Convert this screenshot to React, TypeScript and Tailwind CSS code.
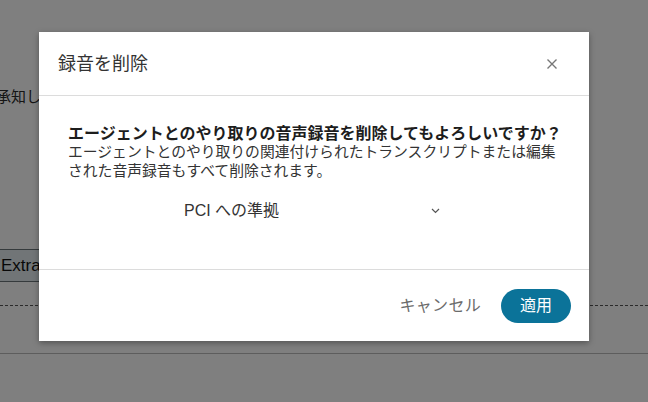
import React from "react";

export default function App() {
  const jp = { fontFamily: '"Liberation Sans", "Noto Sans CJK JP", sans-serif' };
  return (
    <div className="relative w-[648px] h-[402px] overflow-hidden bg-white" style={jp}>
      {/* background page */}
      <div className="absolute left-[-4px] top-[87px] text-[15px] leading-[20px] text-[#2a2a2a] whitespace-nowrap">
        承知し...
      </div>
      <div className="absolute left-[-4px] top-[249px] w-[120px] h-[33px] border border-[#6b7478] bg-[#e2eaee] text-[17px] leading-[31px] pl-[4px] text-[#111]">
        Extra
      </div>
      <div className="absolute left-0 right-0 top-[305px] border-t border-dashed border-[#555]" />
      <div className="absolute left-0 right-0 top-[353px] border-t border-[#bbb]" />
      <div className="absolute inset-0 bg-black/50" />

      {/* modal */}
      <div className="absolute left-[39px] top-[32px] w-[550px] h-[309px] bg-white shadow-[0_2px_6px_rgba(0,0,0,0.35)] flex flex-col">
        <div className="h-[64px] flex items-center justify-between border-b border-[#dcdcdc] pl-[19px] pr-[31px]">
          <div className="text-[18px] text-[#333] mt-[1px]">録音を削除</div>
          <svg width="12" height="12" viewBox="0 0 12 12" className="text-[#777]">
            <path d="M1.5 1.5 L10.5 10.5 M10.5 1.5 L1.5 10.5" stroke="currentColor" strokeWidth="1.4" />
          </svg>
        </div>
        <div className="h-[174px] border-b border-[#dcdcdc] pl-[29px] pr-[20px] pt-[28px]">
          <div className="text-[16px] leading-[20px] font-bold text-[#1d1d1d] whitespace-nowrap">
            エージェントとのやり取りの音声録音を削除してもよろしいですか？
          </div>
          <div className="text-[14.8px] leading-[19px] text-[#333] mt-[-1px]">
            エージェントとのやり取りの関連付けられたトランスクリプトまたは編集
            <br />
            された音声録音もすべて削除されます。
          </div>
          <div className="flex items-center mt-[18px] ml-[116px] w-[256px] justify-between">
            <span className="text-[16px] text-[#333]">PCI への準拠</span>
            <svg width="9" height="6" viewBox="0 0 9 6" className="text-[#555]">
              <path d="M1 1 L4.5 4.5 L8 1" fill="none" stroke="currentColor" strokeWidth="1.2" />
            </svg>
          </div>
        </div>
        <div className="flex-1 flex items-center justify-end pr-[18px] gap-[20px]">
          <span className="text-[16px] text-[#6b6b6b] tracking-[0.3px]">キャンセル</span>
          <button className="w-[70px] h-[34px] rounded-full bg-[#0b7399] text-white text-[16px]">
            適用
          </button>
        </div>
      </div>
    </div>
  );
}
